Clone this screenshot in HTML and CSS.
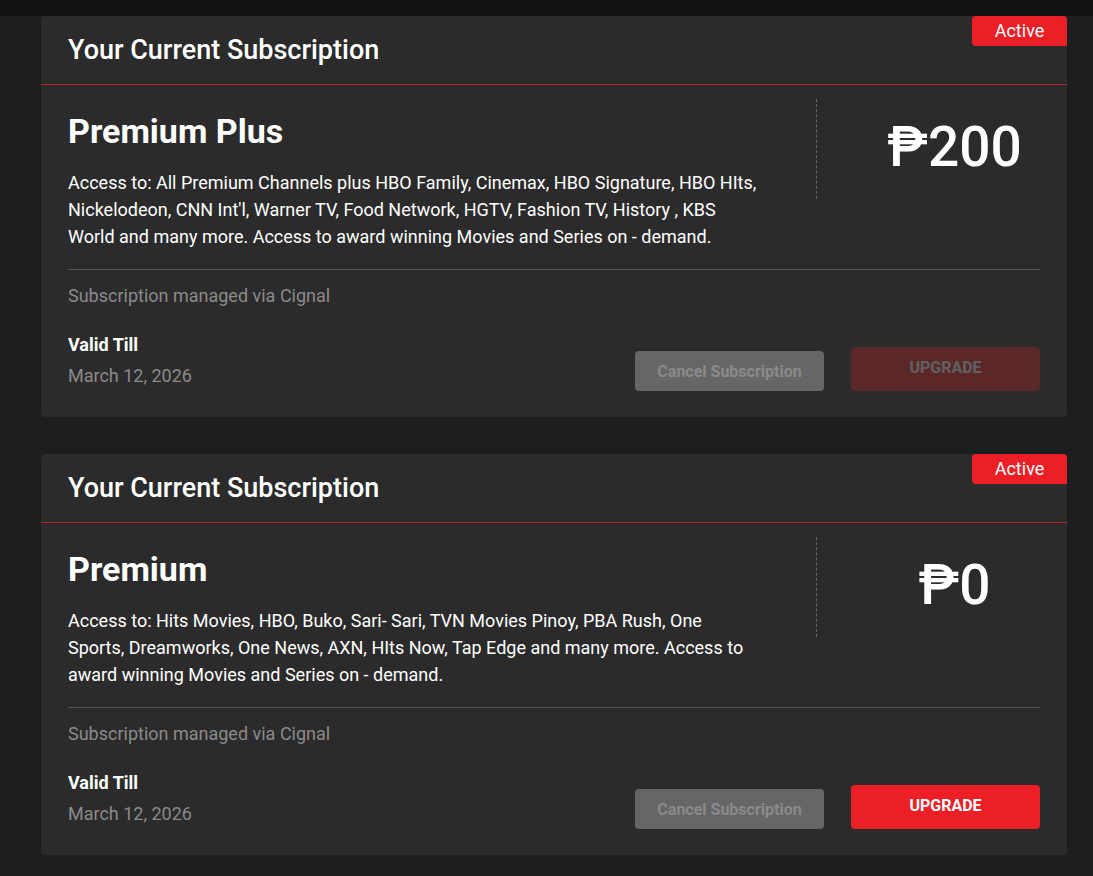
FILE: index.html
```html
<!DOCTYPE html>
<html lang="en">
<head>
  <meta charset="UTF-8" />
  <meta name="viewport" content="width=device-width, initial-scale=1.0" />
  <title>Subscription</title>
  <link rel="stylesheet" href="styles.css">
</head>
<body>
  <div class="topbar"></div>
  <div class="page">

    <div class="card">
      <span class="badge">Active</span>
      <div class="card-head">Your Current Subscription</div>
      <div class="card-body">
        <div class="plan">
          <div class="plan-info">
            <h2>Premium Plus</h2>
            <p class="desc">Access to: All Premium Channels plus HBO Family, Cinemax, HBO Signature, HBO HIts, Nickelodeon, CNN Int'l, Warner TV, Food Network, HGTV, Fashion TV, History , KBS World and many more. Access to award winning Movies and Series on - demand.</p>
          </div>
          <div class="plan-price">₱200</div>
        </div>
        <div class="managed">Subscription managed via Cignal</div>
        <div class="foot">
          <div class="valid">
            <div class="valid-label">Valid Till</div>
            <div class="valid-date">March 12, 2026</div>
          </div>
          <div class="actions">
            <button class="btn btn-cancel">Cancel Subscription</button>
            <button class="btn btn-upgrade disabled">UPGRADE</button>
          </div>
        </div>
      </div>
    </div>

    <div class="card">
      <span class="badge">Active</span>
      <div class="card-head">Your Current Subscription</div>
      <div class="card-body">
        <div class="plan">
          <div class="plan-info">
            <h2>Premium</h2>
            <p class="desc">Access to: Hits Movies, HBO, Buko, Sari- Sari, TVN Movies Pinoy, PBA Rush, One Sports, Dreamworks, One News, AXN, HIts Now, Tap Edge and many more. Access to award winning Movies and Series on - demand.</p>
          </div>
          <div class="plan-price">₱0</div>
        </div>
        <div class="managed">Subscription managed via Cignal</div>
        <div class="foot">
          <div class="valid">
            <div class="valid-label">Valid Till</div>
            <div class="valid-date">March 12, 2026</div>
          </div>
          <div class="actions">
            <button class="btn btn-cancel">Cancel Subscription</button>
            <button class="btn btn-upgrade">UPGRADE</button>
          </div>
        </div>
      </div>
    </div>

  </div>
</body>
</html>
```

FILE: styles.css
```css
:root {
  --bg: #1d1e20;
  --card: #2b2b2b;
  --red: #ec1f27;
  --text: #ffffff;
  --subtle: #8a8a8a;
  --line: #555555;
}

body {
  margin: 0;
  font-family: Roboto, 'Liberation Sans', sans-serif;
  background-color: var(--bg);
  color: var(--text);
}

.topbar {
  height: 16px;
  background-color: #121212;
}

.page {
  width: 1026px;
  margin-left: 41px;
}

.card {
  position: relative;
  background-color: var(--card);
  border-radius: 4px;
  margin-bottom: 37px;
}

.badge {
  position: absolute;
  top: 0;
  right: 0;
  width: 95px;
  height: 30px;
  line-height: 30px;
  text-align: center;
  background-color: var(--red);
  color: #fff;
  font-size: 18px;
  border-radius: 4px 4px 0 4px;
}

.card-head {
  height: 68px;
  line-height: 68px;
  padding-left: 27px;
  font-size: 27px;
  font-weight: 500;
  border-bottom: 1px solid #b3262b;
}

.card-body {
  padding: 14px 27px 26px;
}

.plan {
  display: flex;
  border-bottom: 1px solid var(--line);
  padding-bottom: 19px;
}

.plan-info {
  flex: 1;
}

h2 {
  margin: 12px 0 0;
  font-size: 34px;
  font-weight: 700;
  line-height: 40px;
}

.desc {
  margin: 18px 0 0;
  max-width: 690px;
  font-size: 18px;
  line-height: 27px;
}

.plan-price {
  width: 224px;
  height: 100px;
  border-left: 1px dashed #666;
  padding-left: 52px;
  box-sizing: border-box;
  text-align: center;
  font-size: 55px;
  font-weight: 500;
  line-height: 96px;
}

.managed {
  margin-top: 15px;
  font-size: 18px;
  line-height: 21px;
  color: var(--subtle);
}

.foot {
  display: flex;
  justify-content: space-between;
  align-items: flex-end;
  margin-top: 28px;
}

.valid {
  padding-bottom: 5px;
}

.valid-label {
  font-size: 18px;
  line-height: 21px;
  font-weight: 700;
}

.valid-date {
  margin-top: 10px;
  font-size: 18px;
  line-height: 21px;
  color: var(--subtle);
}

.actions {
  display: flex;
  align-items: flex-end;
  gap: 27px;
}

.btn {
  width: 189px;
  border: none;
  border-radius: 4px;
  font-family: inherit;
  font-size: 16px;
  font-weight: 700;
  cursor: pointer;
}

.btn-cancel {
  height: 40px;
  background-color: #666666;
  color: #8a8a8a;
}

.btn-upgrade {
  height: 44px;
  background-color: var(--red);
  color: #fff;
  padding-bottom: 4px;
}

.btn-upgrade.disabled {
  opacity: 0.25;
  cursor: default;
}
```
